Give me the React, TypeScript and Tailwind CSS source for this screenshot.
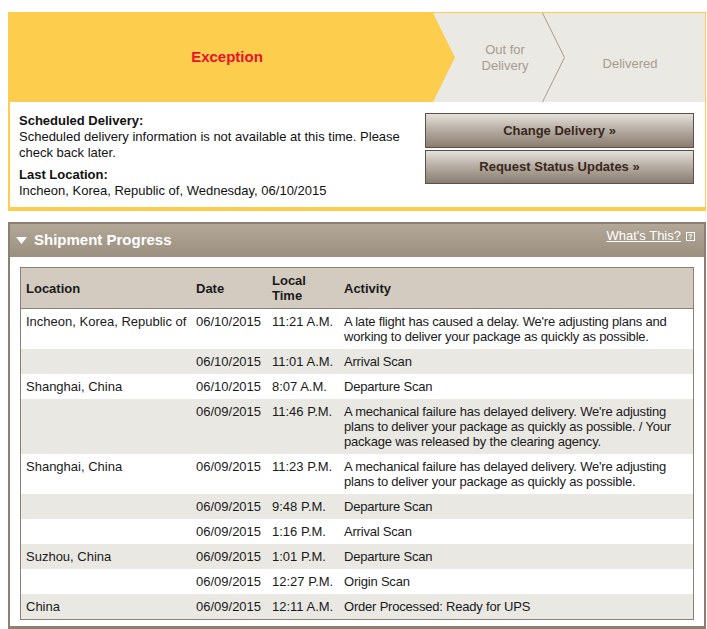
import React from 'react';

interface ProgressRow {
  location: string;
  date: string;
  time: string;
  activity: string;
}

const rows: ProgressRow[] = [
  {
    location: 'Incheon, Korea, Republic of',
    date: '06/10/2015',
    time: '11:21 A.M.',
    activity: "A late flight has caused a delay. We're adjusting plans and working to deliver your package as quickly as possible."
  },
  { location: '', date: '06/10/2015', time: '11:01 A.M.', activity: 'Arrival Scan' },
  { location: 'Shanghai, China', date: '06/10/2015', time: '8:07 A.M.', activity: 'Departure Scan' },
  {
    location: '',
    date: '06/09/2015',
    time: '11:46 P.M.',
    activity: "A mechanical failure has delayed delivery. We're adjusting plans to deliver your package as quickly as possible. / Your package was released by the clearing agency."
  },
  {
    location: 'Shanghai, China',
    date: '06/09/2015',
    time: '11:23 P.M.',
    activity: "A mechanical failure has delayed delivery. We're adjusting plans to deliver your package as quickly as possible."
  },
  { location: '', date: '06/09/2015', time: '9:48 P.M.', activity: 'Departure Scan' },
  { location: '', date: '06/09/2015', time: '1:16 P.M.', activity: 'Arrival Scan' },
  { location: 'Suzhou, China', date: '06/09/2015', time: '1:01 P.M.', activity: 'Departure Scan' },
  { location: '', date: '06/09/2015', time: '12:27 P.M.', activity: 'Origin Scan' },
  { location: 'China', date: '06/09/2015', time: '12:11 A.M.', activity: 'Order Processed: Ready for UPS' }
];

const buttonClass =
  'flex items-center justify-center border border-[#5d5045] bg-linear-to-b from-[#e4e1db] via-[#b4aba1] to-[#8a7d70] text-[13px] font-bold text-[#3a281c]';

export default function App() {
  return (
    <div className="min-h-[629px] w-[707px] bg-white pt-[12px] font-['Liberation_Sans',Arial,sans-serif] text-[13px] text-[#111]">
      {/* Status banner + delivery details */}
      <div className="ml-[8px] w-[698px] border-t border-r border-b-4 border-l-2 border-[#fdce4e]">
        <div className="relative flex h-[89px] bg-[#eae9e4]">
          <div className="flex w-[423px] items-center justify-center bg-[#fdce4e] pl-[11px] text-[15px] font-bold text-[#e8112d]">
            Exception
          </div>
          <div className="flex w-[132px] items-center justify-center pl-[12px] text-center leading-[16px] text-[#a89c90]">
            Out for
            <br />
            Delivery
          </div>
          <div className="flex flex-1 items-center justify-center pt-[13px] pr-[10px] text-[#a89c90]">
            Delivered
          </div>

          {/* arrow tip of the active step */}
          <svg className="absolute top-0 left-[423px]" width="23" height="89" viewBox="0 0 23 89">
            <polygon points="0,0 22,44.5 0,89" fill="#fdce4e" />
          </svg>
          {/* chevron divider */}
          <svg className="absolute top-0 left-[532px]" width="24" height="89" viewBox="0 0 24 89">
            <polyline points="0.5,0 22.5,44.5 0.5,89" fill="none" stroke="#a99b8e" strokeWidth="1" />
          </svg>
        </div>

        <div className="flex justify-between bg-white pt-[11px] pr-[11px] pb-[8px] pl-[9px]">
          <div className="w-[395px] leading-[16px]">
            <div className="font-bold">Scheduled Delivery:</div>
            <div>Scheduled delivery information is not available at this time. Please check back later.</div>
            <div className="mt-[6px] font-bold">Last Location:</div>
            <div>Incheon, Korea, Republic of, Wednesday, 06/10/2015</div>
          </div>
          <div className="flex w-[269px] flex-col gap-[2px]">
            <button className={`h-[35px] ${buttonClass}`}>Change Delivery »</button>
            <button className={`h-[34px] ${buttonClass}`}>Request Status Updates »</button>
          </div>
        </div>
      </div>

      {/* Shipment Progress */}
      <div className="mt-[11px] ml-[8px] w-[698px] border-2 border-b-[3px] border-[#8c8075]">
        <div className="flex h-[33px] justify-between bg-linear-to-b from-[#b3a898] to-[#9b8f80] pr-[9px] pl-[6px]">
          <div className="flex items-center gap-[7px] text-[15px] font-bold text-white">
            <svg width="11" height="7" viewBox="0 0 11 7">
              <polygon points="0,0 11,0 5.5,7" fill="#ffffff" />
            </svg>
            Shipment Progress
          </div>
          <div className="mt-[4px] flex items-start gap-[5px] leading-[15px] text-white">
            <a className="underline">What's This?</a>
            <span className="mt-[4px] flex h-[9px] w-[9px] items-center justify-center border border-white text-[7px] leading-none font-bold">
              ?
            </span>
          </div>
        </div>

        <div className="bg-white px-[10px] pt-[10px] pb-[6px]">
          <table className="w-full table-fixed border-separate border-spacing-0 border border-[#8c8075] text-[#1a1a1a]">
            <colgroup>
              <col className="w-[170px]" />
              <col className="w-[76px]" />
              <col className="w-[72px]" />
              <col />
            </colgroup>
            <thead>
              <tr className="bg-[#d3cbbf]">
                <th className="border-b border-[#8c8075] py-[5px] pr-[3px] pl-[5px] text-left align-middle leading-[15px] font-bold">
                  Location
                </th>
                <th className="border-b border-[#8c8075] py-[5px] pr-[3px] pl-[5px] text-left align-middle leading-[15px] font-bold">
                  Date
                </th>
                <th className="border-b border-[#8c8075] py-[5px] pr-[3px] pl-[5px] text-left align-middle leading-[15px] font-bold">
                  Local Time
                </th>
                <th className="border-b border-[#8c8075] py-[5px] pr-[6px] pl-[5px] text-left align-middle leading-[15px] font-bold">
                  Activity
                </th>
              </tr>
            </thead>
            <tbody>
              {rows.map((row, i) => (
                <tr key={i} className={i % 2 === 1 ? 'bg-[#e9e8e3]' : 'bg-white'}>
                  <td className="py-[5px] pl-[5px] align-top leading-[15px] whitespace-nowrap">{row.location}</td>
                  <td className="py-[5px] pl-[5px] align-top leading-[15px] whitespace-nowrap">{row.date}</td>
                  <td className="py-[5px] pl-[5px] align-top leading-[15px] whitespace-nowrap">{row.time}</td>
                  <td className="py-[5px] pr-[4px] pl-[5px] align-top leading-[15px] tracking-[-0.2px]">{row.activity}</td>
                </tr>
              ))}
            </tbody>
          </table>
        </div>
      </div>
    </div>
  );
}
